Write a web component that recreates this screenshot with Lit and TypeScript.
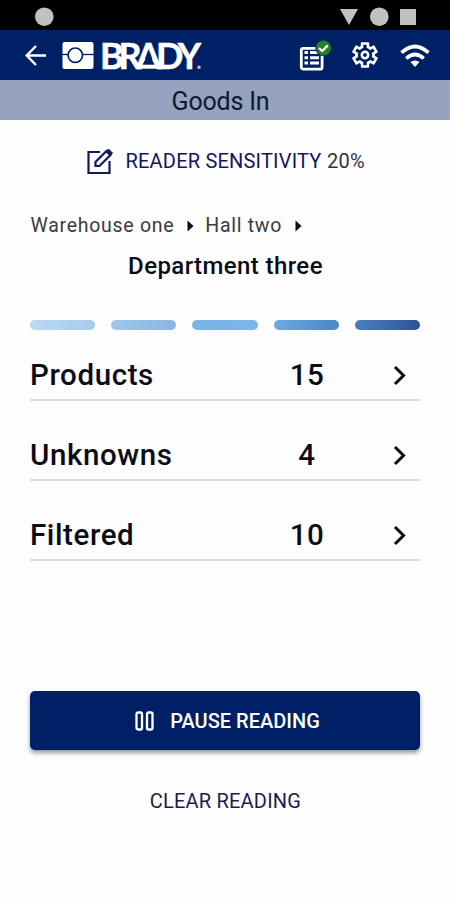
import { LitElement, html, css, svg } from "lit";
import { customElement } from "lit/decorators.js";

interface Row {
  label: string;
  count: number;
}

const rows: Row[] = [
  { label: "Products", count: 15 },
  { label: "Unknowns", count: 4 },
  { label: "Filtered", count: 10 },
];

const teeth = [0, 60, 120, 180, 240, 300];

@customElement("brady-logo")
class BradyLogo extends LitElement {
  static styles = css`
    :host { display: block; width: 146px; height: 40px; }
    svg { display: block; overflow: visible; }
    .word { font: 700 36px Lato, sans-serif; fill: #fff; stroke: #fff; stroke-width: 0.5px; }
  `;
  render() {
    return html`<svg width="146" height="40" viewBox="0 -5 146 40">
      <rect x="0.5" y="2" width="31" height="27" rx="2" fill="#fff" />
      <path d="M0 14.5h32" stroke="#002065" stroke-width="1.3" />
      <circle cx="13.3" cy="15.2" r="7.2" fill="#fff" stroke="#002065" stroke-width="1.7" />
      <text class="word" x="38 56.5 74 94 115.800" y="28.600">BRADY</text>
      <path d="M87 11L92 24.300H81z" fill="#002065" />
      <path d="M78 26.700h20" stroke="#fff" stroke-width="4" />
      <circle cx="137" cy="27.200" r="1.700" fill="#b9c2da" />
    </svg>`;
  }
}

@customElement("app-root")
class AppRoot extends LitElement {
  static styles = css`
    :host {
      display: flex;
      flex-direction: column;
      width: 450px;
      height: 900px;
      box-sizing: border-box;
      background: #fdfdfd;
      color: #0b0c18;
      font-family: Roboto, sans-serif;
      overflow: hidden;
    }
    svg { display: block; flex: none; }
    .status { height: 30px; background: #000; }
    .bar {
      height: 50px;
      background: #002065;
      display: flex;
      align-items: center;
      padding: 0 18px 0 24px;
      box-sizing: border-box;
    }
    .logo { margin-left: 14px; }
    .tools { margin-left: auto; display: flex; align-items: center; gap: 19px; }
    .title {
      height: 40px;
      line-height: 43px;
      background: #95a2c0;
      text-align: center;
      font-size: 25px;
      letter-spacing: -0.2px;
      color: #10182f;
      padding-right: 9px;
    }
    .content { flex: 1; padding: 0 30px; display: flex; flex-direction: column; }
    .sens {
      margin-top: 26px;
      height: 30px;
      display: flex;
      align-items: center;
      padding-left: 56px;
      font-size: 20px;
      letter-spacing: 0.2px;
      color: #14165e;
      white-space: pre;
    }
    .sens .label { margin-left: 11.5px; }
    .sens .value { color: #33333b; margin-left: 5.5px; }
    .crumbs {
      margin-top: 34px;
      height: 30px;
      display: flex;
      align-items: center;
      padding-left: 0.5px;
      font-size: 19.5px;
      letter-spacing: 0.72px;
      color: #3a3a42;
    }
    .crumbs svg { margin: 1px 11px 0 13px; }
    .dept {
      height: 30px;
      margin-top: 10px;
      line-height: 32px;
      text-align: center;
      font-size: 24px;
      font-weight: 500;
      letter-spacing: 0.4px;
      padding-left: 1px;
    }
    .steps { margin-top: 40px; display: flex; gap: 16px; }
    .step { flex: 1; height: 10px; border-radius: 5px; }
    .s0 { background: linear-gradient(90deg, #b9d8f3, #a9cbea); }
    .s1 { background: linear-gradient(90deg, #a0c7ea, #88b6e2); }
    .s2 { background: linear-gradient(90deg, #7db4e6, #7ab5ea); }
    .s3 { background: linear-gradient(90deg, #6aabe0, #4a87c6); }
    .s4 { background: linear-gradient(90deg, #4c7fbd, #2f5296); }
    .rows { margin-top: 20px; }
    .row {
      height: 80px;
      display: grid;
      grid-template-columns: 232px 90px 1fr;
      align-content: start;
      align-items: center;
      font-size: 29.5px;
      font-weight: 500;
      letter-spacing: 0.6px;
    }
    .row > * { height: 49px; line-height: 51px; border-bottom: 2px solid #dcdcde; box-sizing: content-box; }
    .count { text-align: center; }
    .go { display: flex; align-items: center; padding-left: 40px; }
    .pause {
      margin-top: 101px;
      height: 59px;
      border-radius: 5px;
      background: #002065;
      color: #fff;
      display: flex;
      align-items: center;
      justify-content: center;
      gap: 15px;
      padding-left: 5px;
      font-size: 20px;
      font-weight: 500;
      box-shadow: 0 3px 4px rgba(0, 0, 0, 0.4);
    }
    .clear {
      margin-top: 36px;
      line-height: 30px;
      text-align: center;
      font-size: 20px;
      letter-spacing: 0.2px;
      padding-left: 1px;
      color: #1c1c52;
    }
  `;

  render() {
    return html`
      <svg class="status" width="450" height="30" viewBox="0 0 450 30" fill="#c1c1c1">
        <circle cx="44.3" cy="16.7" r="9.3" />
        <path d="M340 9h18l-9 16z" />
        <circle cx="379.3" cy="16.7" r="9.3" />
        <path d="M400 9h16v16h-16z" />
      </svg>
      <div class="bar">
        <svg width="24" height="24" viewBox="0 0 24 24" fill="none" stroke="#fff" stroke-width="2.5">
          <path d="M22 12.5H3M12 3l-9.3 9.5L12 22" />
        </svg>
        <brady-logo class="logo"></brady-logo>
        <div class="tools">
          <svg width="34" height="34" viewBox="0 0 34 34">
            <rect x="3.3" y="10.3" width="20.8" height="20.9" rx="2" fill="none" stroke="#fff" stroke-width="2.8" />
            <path d="M6.5 14.5h3.500M12 14.500h9M6.500 19.800h3.500M12 19.800h9M6.500 25h3.500M12 25h9" stroke="#fff" stroke-width="3" />
            <circle cx="25.5" cy="10" r="8.3" fill="#002065" />
            <circle cx="25.5" cy="10" r="7.5" fill="#228028" />
            <path d="M21 10l3.2 3 5.6-5.6" fill="none" stroke="#fff" stroke-width="2.2" />
          </svg>
          <svg width="28" height="28" viewBox="-14 -14 28 28">
            ${teeth.map((a) => svg`<rect x="-4.2" y="-12.8" width="8.4" height="8" rx="1" fill="#fff" transform="rotate(${a})" />`)}
            <circle r="10" fill="#fff" />
            ${teeth.map((a) => svg`<rect x="-1.7" y="-10.2" width="3.4" height="6" fill="#002065" transform="rotate(${a})" />`)}
            <circle r="7.2" fill="#002065" />
            <circle r="3.2" fill="none" stroke="#fff" stroke-width="2.6" />
          </svg>
          <svg width="34" height="28" viewBox="0 0 34 28" fill="none" stroke="#fff" stroke-width="3.6">
            <path d="M3.5 11.7Q17-.7 30.5 11.7M8.3 17.5Q17 9.5 25.7 17.5" />
            <path d="M12.5 21Q17 18 21.5 21L17 26z" fill="#fff" stroke="none" />
          </svg>
        </div>
      </div>
      <div class="title">Goods In</div>
      <div class="content">
        <div class="sens">
          <svg width="28" height="28" viewBox="0 0 28 28" fill="none" stroke="#14165e" stroke-width="2.2">
            <path d="M14 5H2.500V26H23.500V14" />
            <path d="M9.500 19v-4L20.500 4l4 4-11 11z" />
            <path d="M20 4.500l2.500-2.500 4 4L24 8.500z" fill="#14165e" stroke-width="1" />
          </svg>
          <span class="label">READER SENSITIVITY</span><span class="value">20%</span>
        </div>
        <div class="crumbs">
          <span>Warehouse one</span>
          <svg width="7" height="12" viewBox="0 0 7 12"><path d="M0.5 0.5L6.5 6 0.5 11.5z" fill="#0b0c18" /></svg>
          <span>Hall two</span>
          <svg width="7" height="12" viewBox="0 0 7 12"><path d="M0.5 0.5L6.5 6 0.5 11.5z" fill="#0b0c18" /></svg>
        </div>
        <div class="dept">Department three</div>
        <div class="steps">${[0, 1, 2, 3, 4].map((i) => html`<div class="step s${i}"></div>`)}</div>
        <div class="rows">
          ${rows.map(
            (r) => html`<div class="row">
              <span>${r.label}</span><span class="count">${r.count}</span>
              <span class="go"><svg width="16" height="22" viewBox="0 0 16 22" fill="none" stroke="#0b0c18" stroke-width="3"><path d="M3 3l8.5 8.5L3 20" /></svg></span>
            </div>`
          )}
        </div>
        <div class="pause">
          <svg width="20" height="20" viewBox="0 0 20 20" fill="none" stroke="#fff" stroke-width="2.3">
            <rect x="1.5" y="1.5" width="5.5" height="17" rx="1.5" />
            <rect x="12" y="1.5" width="5.5" height="17" rx="1.5" />
          </svg>
          <span>PAUSE READING</span>
        </div>
        <div class="clear">CLEAR READING</div>
      </div>
    `;
  }
}
